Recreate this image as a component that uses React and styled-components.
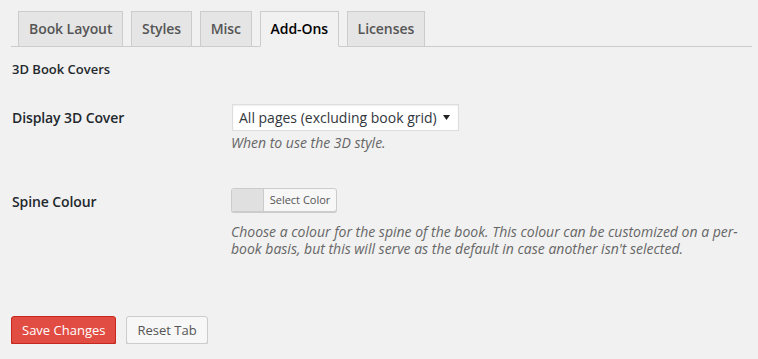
import React from 'react'
import styled, { createGlobalStyle } from 'styled-components'

const GlobalStyle = createGlobalStyle`
  html, body {
    margin: 0;
    padding: 0;
    background: #f1f1f1;
  }
  body {
    font-family: "Open Sans", "Liberation Sans", sans-serif;
    color: #23282d;
  }
`

const Page = styled.div`
  padding: 11px 6px 0 11px;
`

const TabBar = styled.div`
  display: flex;
  align-items: flex-end;
  gap: 7.6px;
  padding-left: 7px;
  border-bottom: 1px solid #ccc;
`

const Tab = styled.a`
  display: block;
  margin-bottom: -1px;
  padding: 5px 10px;
  font-size: 14px;
  line-height: 24px;
  font-weight: 600;
  letter-spacing: -0.07px;
  text-decoration: none;
  border: 1px solid #ccc;
  border-bottom-color: ${p => (p.$active ? '#f1f1f1' : '#ccc')};
  background: ${p => (p.$active ? '#f1f1f1' : '#e5e5e5')};
  color: ${p => (p.$active ? '#000' : '#555')};
`

const Heading = styled.h3`
  margin: 13px 0 0 1px;
  font-size: 13px;
  line-height: 18px;
  font-weight: 600;
  color: #23282d;
`

const Row = styled.div`
  display: grid;
  grid-template-columns: 220px 1fr;
  margin-top: ${p => p.$top}px;
  padding-right: 10px;
`

const Label = styled.div`
  font-size: 14px;
  font-weight: 600;
  letter-spacing: -0.1px;
  line-height: ${p => p.$lh}px;
  padding-top: ${p => p.$pt || 0}px;
  padding-left: 1px;
  color: #23282d;
`

const Field = styled.div`
  display: flex;
  flex-direction: column;
  align-items: flex-start;
`

const SelectBox = styled.div`
  display: flex;
  align-items: center;
  justify-content: space-between;
  box-sizing: border-box;
  width: 227px;
  height: 27px;
  margin-left: 1px;
  padding: 0 8px 0 6px;
  background: #fff;
  border: 1px solid #ddd;
  box-shadow: inset 0 1px 2px rgba(0, 0, 0, 0.07);
  font-size: 14px;
  color: #32373c;
`

const Description = styled.p`
  margin: ${p => p.$mt}px 0 0;
  font-size: 14px;
  line-height: 17px;
  font-style: italic;
  color: #666;
`

const ColorButton = styled.div`
  display: flex;
  box-sizing: border-box;
  width: 106px;
  height: 24px;
  border: 1px solid #ccc;
  border-radius: 3px;
  box-shadow: 0 1px 0 #ccc;
  overflow: hidden;
  background: #f7f7f7;
`

const Swatch = styled.span`
  width: 31px;
  background: #e0e0e0;
  border-right: 1px solid #ccc;
`

const ColorLabel = styled.span`
  flex: 1;
  font-size: 11px;
  line-height: 22px;
  color: #555;
  text-align: center;
`

const Actions = styled.div`
  display: flex;
  gap: 10px;
  margin-top: 59px;
`

const Button = styled.button`
  box-sizing: border-box;
  height: 28px;
  padding: 0 10px 1px;
  font-family: "Open Sans", "Liberation Sans", sans-serif;
  font-size: 13px;
  line-height: 26px;
  border-radius: 3px;
  cursor: pointer;
  border: 1px solid ${p => (p.$primary ? '#c7281d' : '#ccc')};
  background: ${p => (p.$primary ? '#e14d43' : '#f7f7f7')};
  color: ${p => (p.$primary ? '#fff' : '#555')};
  box-shadow: ${p => (p.$primary ? '0 1px 0 #ba281e' : '0 1px 0 #ccc')};
`

const tabs = ['Book Layout', 'Styles', 'Misc', 'Add-Ons', 'Licenses']

export default function App() {
  return (
    <Page>
      <GlobalStyle />
      <TabBar>
        {tabs.map(t => (
          <Tab key={t} $active={t === 'Add-Ons'}>{t}</Tab>
        ))}
      </TabBar>
      <Heading>3D Book Covers</Heading>

      <Row $top={26}>
        <Label $lh={27}>Display 3D Cover</Label>
        <Field>
          <SelectBox>
            <span>All pages (excluding book grid)</span>
            <svg width="7" height="5" viewBox="0 0 7 5">
              <path d="M0 0 H7 L3.5 5 Z" fill="#222" />
            </svg>
          </SelectBox>
          <Description $mt={3}>When to use the 3D style.</Description>
        </Field>
      </Row>

      <Row $top={37}>
        <Label $lh={24} $pt={2}>Spine Colour</Label>
        <Field>
          <ColorButton>
            <Swatch />
            <ColorLabel>Select Color</ColorLabel>
          </ColorButton>
          <Description $mt={11}>
            Choose a colour for the spine of the book. This colour can be customized on a per-book basis, but this will serve as the default in case another isn't selected.
          </Description>
        </Field>
      </Row>

      <Actions>
        <Button $primary>Save Changes</Button>
        <Button>Reset Tab</Button>
      </Actions>
    </Page>
  )
}
